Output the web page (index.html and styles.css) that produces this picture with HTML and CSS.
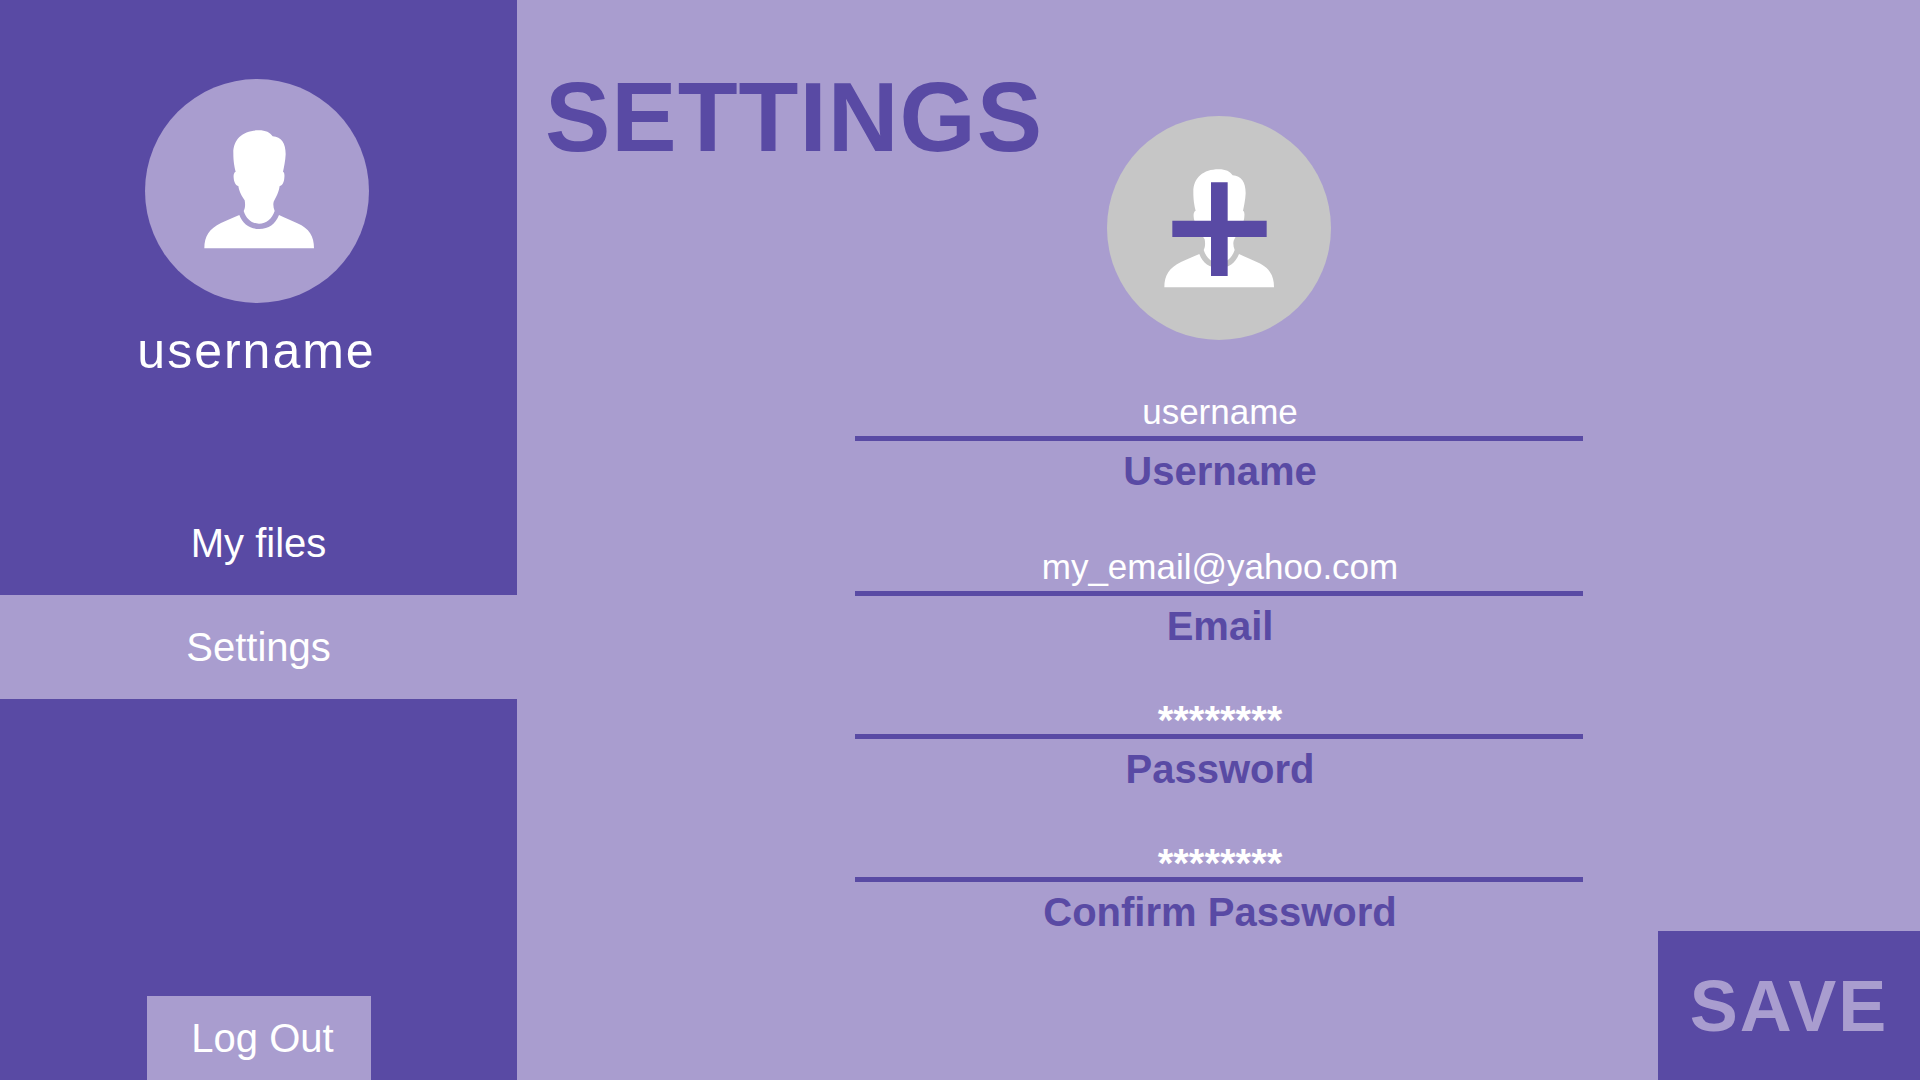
FILE: index.html
```html
<!DOCTYPE html>
<html lang="en">
<head>
  <meta charset="utf-8">
  <meta name="viewport" content="width=device-width, initial-scale=1">
  <title>Settings</title>
  <link rel="stylesheet" href="styles.css">
</head>
<body>
  <svg class="sprite" aria-hidden="true">
    <symbol id="person" overflow="visible">
      <path d="M384 182C406 182 418 189 426 200C452 202 465 220 465 254C464 275 460 292 457 306C461 308 462 314 461 324C460 338 455 348 447 349C444 370 436 382 429 396C427 404 428 414 432 424C424 448 407 462 385 462C363 462 347 448 339 424C344 414 344 404 342 392C334 380 326 368 323 349C316 347 310 338 309 324C308 315 310 308 315 306C311 290 308 275 308 250C308 207 338 182 384 182Z"/>
      <path d="M326 436C336 463 357 478 386 478C414 478 434 463 445 436C465 446 482 452 500 461C536 477 550 500 550 536H221C221 500 236 477 271 460C289 451 307 445 326 436Z"/>
    </symbol>
  </svg>

  <div class="app">
    <aside class="sidebar">
      <div class="profile">
        <svg class="avatar" viewBox="43 28 672 672" role="img" aria-label="Profile picture">
          <circle class="avatar-disc" cx="379" cy="364" r="336"/>
          <use href="#person" class="avatar-person"/>
        </svg>
        <p class="profile-name">username</p>
      </div>
      <nav class="nav">
        <a class="nav-link" href="#files">My files</a>
        <a class="nav-link nav-link-active" href="#settings" aria-current="page">Settings</a>
      </nav>
      <button class="logout" type="button">Log Out</button>
    </aside>

    <main class="content">
      <h1 class="title">SETTINGS</h1>
      <form class="form" id="settings-form">
        <button class="picture-button" type="button" aria-label="Change profile picture">
          <svg class="avatar" viewBox="51 48 672 672" aria-hidden="true">
            <circle class="picture-disc" cx="387" cy="384" r="336"/>
            <use href="#person" class="avatar-person" y="26" x="2"/>
            <path class="picture-plus" d="M363 247h50v115h117v49H413v117H363V411H247V362H363Z"/>
          </svg>
        </button>
        <div class="field">
          <input class="input" id="username" type="text" value="username">
          <label class="label" for="username">Username</label>
        </div>
        <div class="field">
          <input class="input" id="email" type="email" value="my_email@yahoo.com">
          <label class="label" for="email">Email</label>
        </div>
        <div class="field">
          <input class="input input-secret" id="password" type="text" value="********">
          <label class="label" for="password">Password</label>
        </div>
        <div class="field">
          <input class="input input-secret" id="confirm" type="text" value="********">
          <label class="label" for="confirm">Confirm Password</label>
        </div>
      </form>
      <button class="save" type="submit" form="settings-form">SAVE</button>
    </main>
  </div>
</body>
</html>
```
FILE: styles.css
```css
:root {
  --deep: #594aa4;
  --soft: #a99dcf;
  --grey: #c6c6c6;
}

* {
  box-sizing: border-box;
}

body {
  margin: 0;
  background: var(--soft);
  color: #fff;
  font-family: "Liberation Sans", Arial, sans-serif;
  font-size: 40px;
}

button,
input {
  margin: 0;
  border: 0;
  border-radius: 0;
  font: inherit;
  color: inherit;
}

button {
  cursor: pointer;
}

.sprite {
  display: none;
}

.app {
  display: flex;
  min-height: 100vh;
}

.sidebar {
  display: flex;
  flex: none;
  flex-direction: column;
  align-items: center;
  width: 517px;
  padding-top: 79px;
  background: var(--deep);
}

.profile {
  display: flex;
  flex-direction: column;
  align-items: center;
  gap: 20px;
  padding-right: 4px;
}

.avatar {
  display: block;
  width: 224px;
  height: 224px;
}

.avatar-disc {
  fill: var(--soft);
}

.avatar-person {
  fill: #fff;
}

.profile-name {
  margin: 0;
  font-size: 50px;
  line-height: 56px;
  letter-spacing: 2px;
}

.nav {
  align-self: stretch;
  margin-top: 112px;
}

.nav-link {
  display: block;
  color: #fff;
  line-height: 104px;
  text-align: center;
  text-decoration: none;
}

.nav-link-active {
  background: var(--soft);
}

.logout {
  width: 224px;
  height: 84px;
  margin-top: auto;
  padding: 0 0 0 8px;
  background: var(--soft);
}

.content {
  display: grid;
  flex: 1;
}

.title,
.form,
.save {
  grid-area: 1 / 1;
}

.title {
  align-self: start;
  justify-self: start;
  margin: 63px 0 0 28px;
  color: var(--deep);
  font-size: 98px;
  line-height: 108px;
  letter-spacing: 1px;
}

.form {
  display: flex;
  flex-direction: column;
  align-items: center;
  justify-self: center;
  gap: 40px;
  width: 728px;
  padding: 116px 0;
}

.picture-button {
  padding: 0;
  border-radius: 50%;
  background: none;
}

.picture-disc {
  fill: var(--grey);
}

.picture-plus {
  fill: var(--deep);
}

.field {
  display: flex;
  flex-direction: column;
  gap: 6px;
  width: 100%;
}

.input {
  width: 100%;
  height: 61px;
  padding: 8px 0 0 3px;
  border-bottom: 5px solid var(--deep);
  background: none;
  font-size: 35px;
  text-align: center;
  outline: none;
}

.input-secret {
  height: 49px;
  padding-top: 16px;
  font-size: 40px;
  font-weight: bold;
}

.label {
  padding-left: 3px;
  color: var(--deep);
  font-weight: bold;
  line-height: 48px;
  text-align: center;
}

.save {
  align-self: end;
  justify-self: end;
  width: 262px;
  height: 149px;
  padding: 0;
  background: var(--deep);
  color: var(--soft);
  font-size: 72px;
  font-weight: bold;
  letter-spacing: 2px;
}
```
